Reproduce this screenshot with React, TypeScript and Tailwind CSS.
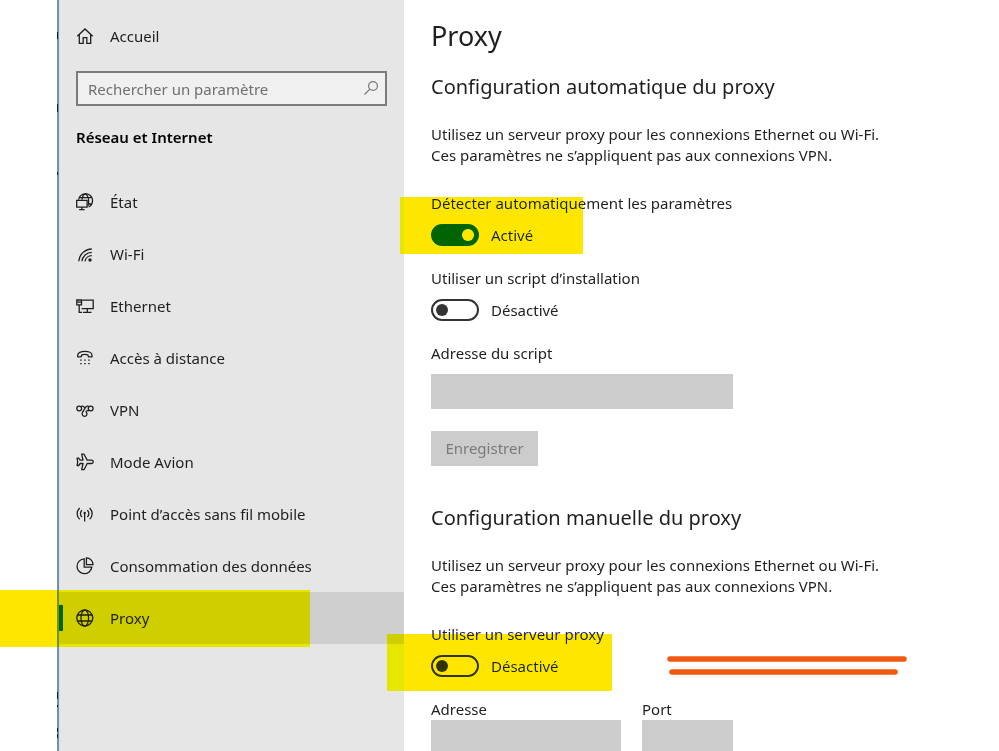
import React from 'react';

interface NavItem {
  id: string;
  label: string;
  icon: React.ReactNode;
}

interface IconProps {
  children: React.ReactNode;
}

function Icon({ children }: IconProps) {
  return (
    <svg
      viewBox="0 0 18 18"
      className="w-[18px] h-[18px] shrink-0"
      fill="none"
      stroke="currentColor"
      strokeWidth="1.3"
      aria-hidden="true"
    >
      {children}
    </svg>
  );
}

const navItems: NavItem[] = [
  {
    id: 'etat',
    label: 'État',
    icon: (
      <Icon>
        <path d="M2.6 6.6A7 7 0 1 1 12.6 14M6 6.6C6.5 3 8 1 9.3 1s3.4 3 3.4 7.2c0 2-.2 3.3-.7 4.6M3.5 4.7h11.7M12 11h3.7" />
        <path d="M.7 7.3h10.4v6.8H.7zM5.9 14v2.5M3.2 16.7h5.4" />
      </Icon>
    )
  },
  {
    id: 'wifi',
    label: 'Wi-Fi',
    icon: (
      <Icon>
        <path d="M2.7 16.3A13.3 13.3 0 0 1 15.8 4M5.9 16.3a10 10 0 0 1 9.9-9M9 16.3a6.8 6.8 0 0 1 6.8-5.6" />
        <circle cx="14" cy="15" r="1.7" fill="currentColor" stroke="none" />
      </Icon>
    )
  },
  {
    id: 'ethernet',
    label: 'Ethernet',
    icon: (
      <Icon>
        <path d="M6.3 3.2h10.9v8.4H5.6M11.3 11.6v3.6M7 15.4h8.5M.8 3h4.7v4.8H.8zM1 5.2h4.3M3.2 7.8v7.6h3" />
      </Icon>
    )
  },
  {
    id: 'distance',
    label: 'Accès à distance',
    icon: (
      <Icon>
        <path
          d="M1.7 7.8V6.2c0-2.4 3.300-3.900 7.100-3.900S16 3.800 16 6.200v1.600h-3.500l-.7-2c-1.800-.6-4.200-.6-6 0l-.7 2z"
          strokeLinejoin="round"
        />
        <path d="M4.200 11.200h9.800M4.200 14.700h9.800" strokeDasharray="1.500 2.500" strokeWidth="1.200" />
      </Icon>
    )
  },
  {
    id: 'vpn',
    label: 'VPN',
    icon: (
      <Icon>
        <circle cx="3.200" cy="7.500" r="2.400" />
        <circle cx="14.700" cy="7.500" r="2.400" />
        <path d="M4.800 5.800c1.200-1 2.600-.7 3.400.4l.8 1.100M13.200 9.300c-1 .8-1.900.6-2.600-.2M13.100 5.700c-1.200-1-2.600-.6-3.500.7l-3 4.800c-1.100 1.900 0 4.200 2 4.200 2.100 0 3-2.300 1.900-4.100l-.9-1.200" />
      </Icon>
    )
  },
  {
    id: 'avion',
    label: 'Mode Avion',
    icon: (
      <Icon>
        <path
          d="M5.700 1.200h2.300l3.200 5.900h4.300c2.300 0 2.300 3.400 0 3.400h-4.300L8 16.700H5.700l1.300-6.200H4.200l-1.500 2H1.100l.6-3.700-.6-3.700h1.600l1.500 2H7z"
          strokeLinejoin="round"
        />
      </Icon>
    )
  },
  {
    id: 'hotspot',
    label: 'Point d’accès sans fil mobile',
    icon: (
      <Icon>
        <path d="M3.700 3c-3.400 3.200-3.400 8.200 0 11.300M6 5.300c-2.100 2-2.100 4.700 0 6.700M13.600 3c3.400 3.200 3.400 8.200 0 11.300M11.300 5.300c2.100 2 2.100 4.700 0 6.700M8.650 8.500v8" />
        <circle cx="8.650" cy="8" r="1.200" fill="currentColor" stroke="none" />
      </Icon>
    )
  },
  {
    id: 'donnees',
    label: 'Consommation des données',
    icon: (
      <Icon>
        <path d="M8.200 1.900a7.400 7.400 0 1 0 7.600 8.300H8.200z" />
        <path d="M10.400.9a6.700 6.700 0 0 1 6.600 6.700h-6.600z" />
      </Icon>
    )
  },
  {
    id: 'proxy',
    label: 'Proxy',
    icon: (
      <Icon>
        <circle cx="8.800" cy="9" r="8" />
        <ellipse cx="8.800" cy="9" rx="3.800" ry="8" />
        <path d="M1.700 6h14.200M1.700 12h14.200" />
      </Icon>
    )
  }
];

interface ToggleProps {
  id: string;
  label: string;
  checked: boolean;
  onChange: (checked: boolean) => void;
}

function Toggle({ id, label, checked, onChange }: ToggleProps) {
  return (
    <div>
      <label htmlFor={id} className="block leading-5">
        {label}
      </label>
      <div className="mt-[11px] flex items-center gap-3 h-[22px]">
        <input
          id={id}
          type="checkbox"
          role="switch"
          checked={checked}
          onChange={e => onChange(e.target.checked)}
          className="appearance-none flex items-center w-12 h-[22px] px-[3px] rounded-full border-2 border-[#333] before:block before:w-3 before:h-3 before:rounded-full before:bg-[#333] checked:justify-end checked:bg-[#006400] checked:border-[#006400] checked:before:bg-white"
        />
        <span>{checked ? 'Activé' : 'Désactivé'}</span>
      </div>
    </div>
  );
}

function Intro() {
  return (
    <p className="mt-[23px] leading-[21px]">
      Utilisez un serveur proxy pour les connexions Ethernet ou Wi-Fi.
      <br />
      Ces paramètres ne s’appliquent pas aux connexions VPN.
    </p>
  );
}

export default function App() {
  const [active, setActive] = React.useState('proxy');
  const [autoDetect, setAutoDetect] = React.useState(true);
  const [useScript, setUseScript] = React.useState(false);
  const [useProxy, setUseProxy] = React.useState(false);

  return (
    <div className="relative flex h-screen overflow-hidden bg-white pl-[57px] font-['Noto_Sans','Open_Sans',sans-serif] text-[15px] text-[#1f1f1f]">
      <aside className="relative w-[347px] shrink-0 bg-[#e6e6e6] border-l-2 border-[#6f93ab]">
        {/* Window edge */}
        <svg className="absolute -left-[3px] top-0 w-1 h-[751px]" viewBox="0 0 4 751" aria-hidden="true">
          <path d="M1 32h1v7h-1zM1 104h1v8h-1zM1 172h1v3h-1zM1 692h1v7h-1zM1 705h1v2h-1zM1 728h1v4h-1zM1 734h1v4h-1z" fill="#0b2233" />
          <path d="M3 0h1v751h-1z" fill="#d5e3ec" />
        </svg>

        <a href="#accueil" className="mt-[23px] ml-[17px] flex items-center gap-4 h-[26px]">
          <Icon>
            <path d="M1.300 9.300 9 2l7.700 7.300M3.300 7.700v8.600h3.900v-5.700h3.600v5.700h3.900V7.700" />
          </Icon>
          Accueil
        </a>

        <div className="relative mt-[22px] ml-[17px] mr-[17px]">
          <input
            type="search"
            aria-label="Rechercher un paramètre"
            placeholder="Rechercher un paramètre"
            className="block w-full h-[35px] pl-[10px] pr-9 border-2 border-[#7c7c7c] bg-[#f0f0f0] placeholder:text-[#707070] outline-none"
          />
          <svg
            className="absolute right-2 top-[9px] w-4 h-4 text-[#777]"
            viewBox="0 0 16 16"
            fill="none"
            stroke="currentColor"
            strokeWidth="1.200"
            aria-hidden="true"
          >
            <circle cx="10" cy="6" r="4.400" />
            <path d="M6.900 9.100 1.500 14.500" />
          </svg>
        </div>

        <h3 className="mt-[21px] ml-[17px] leading-5 font-semibold text-black">Réseau et Internet</h3>

        <nav className="mt-[29px]">
          {navItems.map(item => (
            <button
              key={item.id}
              type="button"
              onClick={() => setActive(item.id)}
              className={`relative flex items-center gap-4 w-full h-[52px] pl-[17px] text-left ${
                active === item.id ? 'bg-[#cfcfcf]' : ''
              }`}
            >
              {active === item.id && <span className="absolute left-0 top-[13px] w-1 h-[26px] bg-[#006400]" />}
              {item.icon}
              {item.label}
            </button>
          ))}
        </nav>
      </aside>

      <main className="flex-1 min-w-0 pl-[27px] pr-6 pt-4">
        <h1 className="text-[27px] leading-10">Proxy</h1>

        <section>
          <h2 className="mt-[17px] text-xl leading-7">Configuration automatique du proxy</h2>
          <Intro />
          <div className="relative mt-[27px]">
            <Toggle
              id="auto-detect"
              label="Détecter automatiquement les paramètres"
              checked={autoDetect}
              onChange={setAutoDetect}
            />
            <span className="absolute -left-[31px] top-1 w-[183px] h-[57px] bg-[#ffe600] mix-blend-darken pointer-events-none" />
          </div>
          <div className="mt-[22px]">
            <Toggle
              id="use-script"
              label="Utiliser un script d’installation"
              checked={useScript}
              onChange={setUseScript}
            />
          </div>
          <label htmlFor="script-address" className="block mt-[22px] leading-5">
            Adresse du script
          </label>
          <input
            id="script-address"
            type="text"
            disabled={!useScript}
            className="block mt-[11px] w-full max-w-[302px] h-[35px] px-3 bg-[#ccc]"
          />
          <button
            type="button"
            disabled={!useScript}
            className="mt-[22px] w-[107px] h-[35px] bg-[#ccc] text-[#7a7a7a]"
          >
            Enregistrer
          </button>
        </section>

        <section>
          <h2 className="mt-[38px] text-xl leading-7">Configuration manuelle du proxy</h2>
          <Intro />
          <div className="relative mt-[27px]">
            <Toggle id="use-proxy" label="Utiliser un serveur proxy" checked={useProxy} onChange={setUseProxy} />
            <span className="absolute -left-[44px] top-[10px] w-[225px] h-[57px] bg-[#ffe600] mix-blend-darken pointer-events-none" />
            <svg
              className="absolute left-[235px] top-[30px] w-[242px] h-6"
              viewBox="0 0 242 24"
              stroke="#f05a10"
              strokeWidth="5.500"
              strokeLinecap="round"
              aria-hidden="true"
            >
              <path d="M4 5h234M6 18h223" />
            </svg>
          </div>
          <div className="mt-[22px] flex gap-[21px]">
            <div className="w-[190px]">
              <label htmlFor="proxy-address" className="block leading-5">
                Adresse
              </label>
              <input
                id="proxy-address"
                type="text"
                disabled={!useProxy}
                className="block mt-px w-full h-[35px] px-3 bg-[#ccc]"
              />
            </div>
            <div className="w-[91px]">
              <label htmlFor="proxy-port" className="block leading-5">
                Port
              </label>
              <input
                id="proxy-port"
                type="text"
                disabled={!useProxy}
                className="block mt-px w-full h-[35px] px-3 bg-[#ccc]"
              />
            </div>
          </div>
        </section>
      </main>

      {/* Marker stroke over the selected entry */}
      <span className="absolute left-0 top-[590px] w-[310px] h-[57px] bg-[#ffe600] mix-blend-darken pointer-events-none" />
    </div>
  );
}
